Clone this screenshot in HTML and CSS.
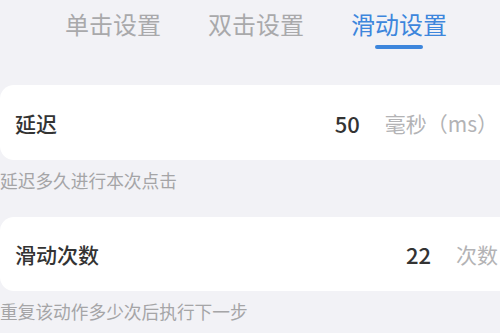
FILE: index.html
```html
<!DOCTYPE html>
<html lang="zh-CN">
<head>
    <meta charset="UTF-8">
    <meta name="viewport" content="width=device-width, initial-scale=1.0">
    <title>滑动设置</title>
    <link rel="stylesheet" href="styles.css">
</head>
<body>
    <div class="tabs">
        <div class="tab">单击设置</div>
        <div class="tab">双击设置</div>
        <div class="tab active">滑动设置</div>
    </div>

    <div class="setting">
        <div class="card">
            <span class="label">延迟</span>
            <span class="value">50</span>
            <span class="unit">毫秒（ms）</span>
        </div>
        <div class="hint">延迟多久进行本次点击</div>
    </div>

    <div class="setting">
        <div class="card">
            <span class="label">滑动次数</span>
            <span class="value">22</span>
            <span class="unit">次数</span>
        </div>
        <div class="hint">重复该动作多少次后执行下一步</div>
    </div>
</body>
</html>
```

FILE: styles.css
```css
html, body {
    margin: 0;
    padding: 0;
}
body {
    font-family: "Noto Sans CJK SC", "Noto Sans", sans-serif;
    background-color: #f2f2f6;
    width: 500px;
    height: 333px;
    overflow: hidden;
}
.tabs {
    display: flex;
    gap: 47px;
    padding: 9px 0 0 65px;
}
.tab {
    display: flex;
    flex-direction: column;
    align-items: center;
    font-size: 24px;
    line-height: 30px;
    color: #a9a9ab;
}
.tab::after {
    content: "";
    width: 48px;
    height: 4px;
    margin-top: 6px;
    border-radius: 2px;
    background-color: transparent;
}
.tab.active {
    color: #3d86dc;
}
.tab.active::after {
    background-color: #3d86dc;
}
.setting {
    margin-top: 36px;
}
.setting + .setting {
    margin-top: 25px;
}
.card {
    display: flex;
    align-items: center;
    height: 75px;
    margin-right: -16px;
    padding: 0 18px 0 15px;
    background-color: white;
    border-radius: 14px;
}
.setting + .setting .card {
    height: 74px;
}
.label {
    flex: 1;
    font-size: 21px;
    font-weight: 500;
    color: #333;
}
.value {
    font-size: 22px;
    font-weight: 500;
    color: #333;
    margin-right: 25px;
}
.unit {
    font-size: 21px;
    color: #b3b3b5;
}
.hint {
    padding-top: 8px;
    font-size: 17.7px;
    line-height: 24px;
    color: #a5a5a7;
}
```
